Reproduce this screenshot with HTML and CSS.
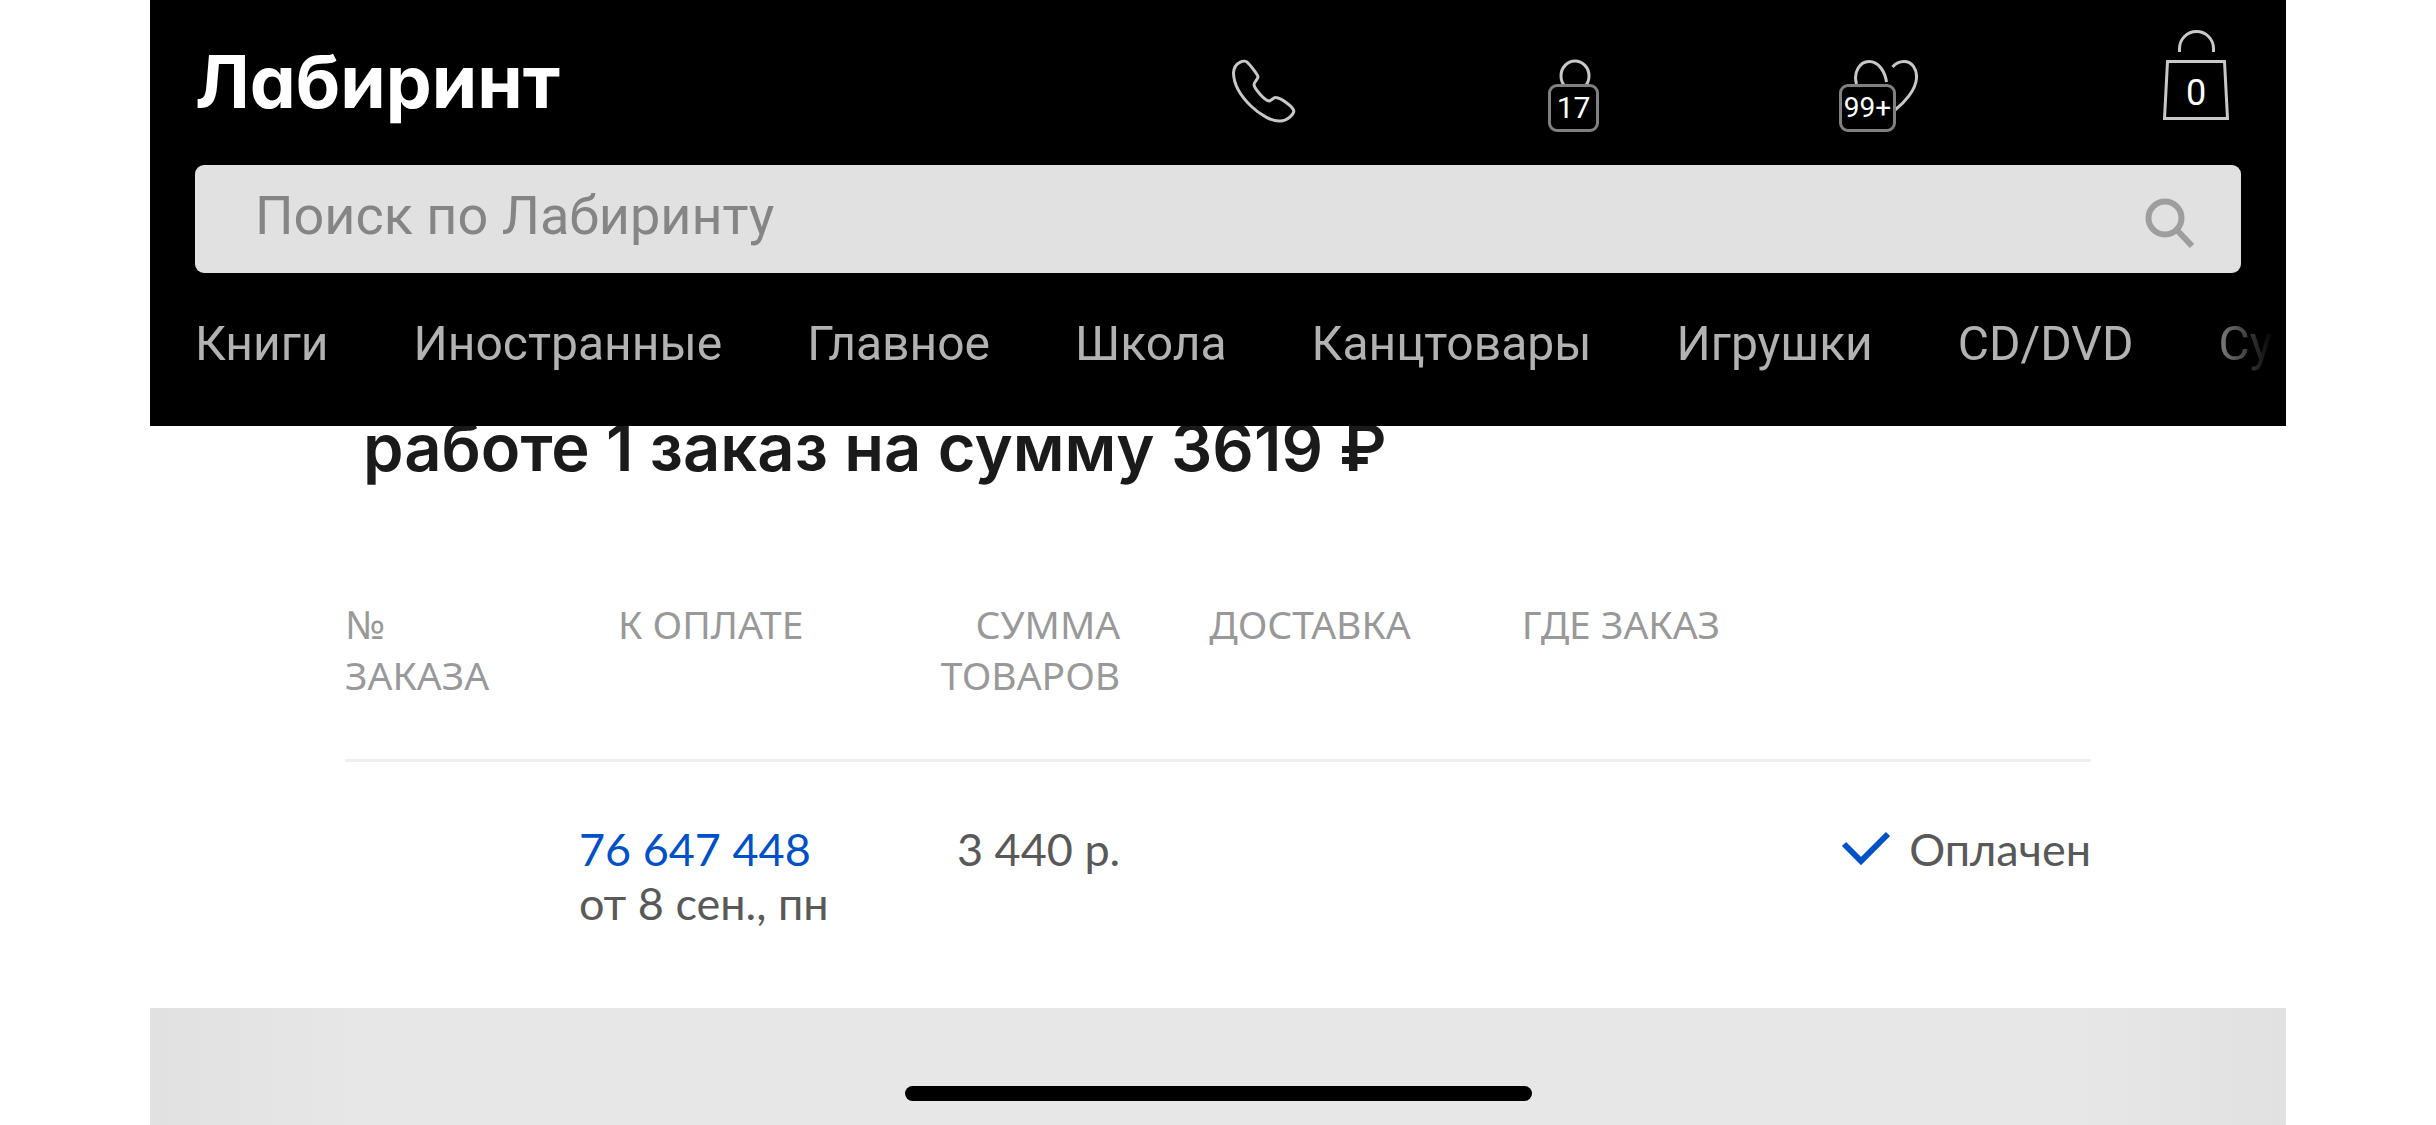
FILE: index.html
```html
<!DOCTYPE html>
<html lang="ru">
<head>
  <meta charset="UTF-8">
  <meta name="viewport" content="width=device-width, initial-scale=1">
  <title>Лабиринт</title>
  <link rel="stylesheet" href="styles.css">
</head>
<body>
  <div class="page">
    <header class="header">
      <div class="header-top">
        <a class="logo" href="#">Лабиринт</a>
        <div class="header-icons">
          <a href="#" class="icon-link" aria-label="Телефон">
            <svg viewBox="0 0 66 96">
              <path d="M18 33C15 29 4 32 3.500 43C4 66 34 92 50 91C58 91 65 83 63.500 80C62 76 51 68 46 67.500C43 67 42 71 39 71C34 70 24 58 24 54.500C24 52 28 49 28 47C28 45 21 36 18 33Z"/>
            </svg>
          </a>
          <a href="#" class="icon-link" aria-label="Профиль">
            <svg viewBox="0 0 66 96">
              <ellipse cx="34" cy="46" rx="14" ry="15"/>
            </svg>
            <span class="badge">17</span>
          </a>
          <a href="#" class="icon-link" aria-label="Отложено">
            <svg viewBox="0 0 66 96">
              <path d="M4.500 54C1 42 8 31.500 17 31.500C27 31.500 33 42 34.500 52M40.500 37C43 34 47 31.500 52 31.500C60 31.500 65 39 64.500 48C64 60 52 73 43 80"/>
            </svg>
            <span class="badge badge-wide">99+</span>
          </a>
          <a href="#" class="icon-link" aria-label="Корзина">
            <svg viewBox="0 0 66 96">
              <path d="M16.500 22V18.500A17 17 0 0 1 50.500 18.500V22M4.500 31.500H61.500L64.500 88.500H1.500Z"/>
            </svg>
            <span class="cart-count">0</span>
          </a>
        </div>
      </div>
      <form class="search">
        <input type="text" id="search" placeholder="Поиск по Лабиринту" aria-label="Поиск по Лабиринту">
        <button type="submit" aria-label="Найти">
          <svg viewBox="0 0 51 51">
            <circle cx="20" cy="20" r="16.500"/>
            <path d="M31 31L47 48"/>
          </svg>
        </button>
      </form>
      <nav class="menu">
        <a href="#">Книги</a>
        <a href="#">Иностранные</a>
        <a href="#">Главное</a>
        <a href="#">Школа</a>
        <a href="#">Канцтовары</a>
        <a href="#">Игрушки</a>
        <a href="#">CD/DVD</a>
        <a href="#">Су</a>
      </nav>
    </header>

    <main class="content">
      <h1>работе 1 заказ на сумму 3619 ₽</h1>
      <table class="orders">
        <colgroup>
          <col class="col-number">
          <col class="col-pay">
          <col class="col-sum">
          <col class="col-delivery">
          <col class="col-where">
          <col class="col-status">
        </colgroup>
        <thead>
          <tr>
            <th>№<br>заказа</th>
            <th class="pay">К оплате</th>
            <th class="sum">Сумма<br>товаров</th>
            <th class="delivery">Доставка</th>
            <th>Где заказ</th>
            <th></th>
          </tr>
        </thead>
        <tbody>
          <tr>
            <td></td>
            <td><a href="#">76 647 448</a><br>от 8 сен., пн</td>
            <td class="sum">3 440 р.</td>
            <td></td>
            <td></td>
            <td>
              <div class="status">
                <svg viewBox="0 0 50 36">
                  <path d="M3 13L20 30L47 3"/>
                </svg>
                Оплачен
              </div>
            </td>
          </tr>
        </tbody>
      </table>
    </main>

    <footer class="footer">
      <div class="home-bar"></div>
    </footer>
  </div>
</body>
</html>
```
FILE: styles.css
```css
* {
  box-sizing: border-box;
}

body {
  margin: 0;
  background: #fff;
  color: #595959;
  font-family: Lato, "Noto Sans", sans-serif;
}

a {
  text-decoration: none;
}

svg {
  display: block;
  fill: none;
}

.page {
  display: flex;
  flex-direction: column;
  min-height: 100vh;
  margin: 0 150px;
}

/* header */
.header {
  position: relative;
  z-index: 2;
  padding: 30px 0 54px 45px;
  background: #000;
  font-family: Roboto, sans-serif;
}

.header-top {
  display: flex;
  justify-content: space-between;
  align-items: center;
  height: 96px;
  margin: 0 57px 39px 0;
}

.logo {
  padding-top: 8px;
  color: #fff;
  font-family: Inter, sans-serif;
  font-size: 73px;
  font-weight: 700;
  line-height: 84px;
  font-feature-settings: "cv11";
}

.header-icons {
  display: flex;
  justify-content: space-between;
  width: 999px;
}

.icon-link {
  position: relative;
  color: #fff;
}

.icon-link svg {
  width: 66px;
  height: 96px;
  stroke: #c8c8c8;
  stroke-width: 3;
}

.badge {
  position: absolute;
  top: 54px;
  left: 7px;
  width: 51px;
  height: 48px;
  border: 3px solid #808080;
  border-radius: 9px;
  background: #000;
  font-size: 30px;
  line-height: 42px;
  text-align: center;
}

.badge-wide {
  left: -13px;
  width: 57px;
  font-size: 28px;
}

.cart-count {
  position: absolute;
  top: 42px;
  left: 0;
  width: 100%;
  font-size: 36px;
  line-height: 42px;
  text-align: center;
}

.search {
  display: flex;
  align-items: center;
  height: 108px;
  margin-right: 45px;
  padding-right: 45px;
  border-radius: 9px;
  background: #e1e1e1;
}

.search input {
  flex: 1;
  height: 100%;
  padding: 0 0 8px 60px;
  border: none;
  outline: none;
  background: none;
  font-family: inherit;
  font-size: 54px;
}

.search input::placeholder {
  color: #858585;
  opacity: 1;
}

.search button {
  padding: 8px 0 0;
  border: none;
  background: none;
  cursor: pointer;
}

.search button svg {
  width: 51px;
  height: 51px;
  stroke: #9e9e9e;
  stroke-width: 6;
}

.menu {
  display: flex;
  gap: 85px;
  margin: 43px 12px 0 0;
  overflow: hidden;
  mask-image: linear-gradient(to left, transparent, #000 78px);
}

.menu a {
  color: #b2b2b2;
  font-size: 48px;
  line-height: 56px;
  white-space: nowrap;
}

/* orders */
.content {
  padding: 0 195px 78px;
}

/* the heading is scrolled partly under the header */
h1 {
  margin: -18px 0 110px 18px;
  color: #1a1a1a;
  font-family: Inter, sans-serif;
  font-size: 65px;
  font-weight: 600;
  line-height: 80px;
}

.orders {
  width: 100%;
  border-collapse: collapse;
  table-layout: fixed;
  font-size: 45px;
  line-height: 54px;
}

.col-number {
  width: 13.4%;
}

.col-pay {
  width: 17%;
}

.col-sum {
  width: 14%;
}

.col-delivery {
  width: 23%;
}

.col-where {
  width: 15%;
}

.orders th {
  padding: 0 0 59px;
  border-bottom: 3px solid #efefef;
  color: #999;
  font-family: "Noto Sans", sans-serif;
  font-size: 39px;
  font-weight: 400;
  line-height: 51px;
  text-align: left;
  text-transform: uppercase;
  vertical-align: top;
  white-space: nowrap;
}

.orders td {
  padding: 60px 0 0;
  vertical-align: top;
  white-space: nowrap;
}

.orders td a {
  color: #0050c8;
}

.orders th.pay {
  padding-left: 39px;
}

.orders th.delivery {
  padding-left: 89px;
}

.orders .sum {
  text-align: right;
}

.status {
  display: flex;
  justify-content: flex-end;
  align-items: center;
  gap: 18px;
}

.status svg {
  width: 50px;
  height: 36px;
  stroke: #0050c8;
  stroke-width: 6;
}

/* footer */
.footer {
  flex: 1;
  padding-top: 78px;
  background: linear-gradient(to right, #e1e1e1, #e7e7e7 10%, #e7e7e7 90%, #e1e1e1);
}

.home-bar {
  width: 627px;
  height: 15px;
  margin: 0 auto;
  border-radius: 8px;
  background: #000;
}
```
